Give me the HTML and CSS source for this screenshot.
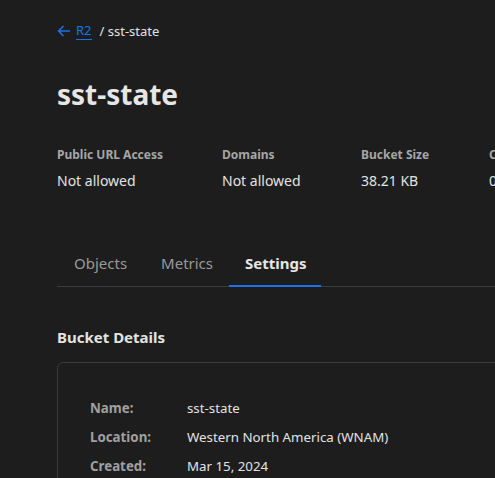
FILE: index.html
```html
<!DOCTYPE html>
<html>
<head>
<meta charset="utf-8">
<link rel="stylesheet" href="styles.css">
</head>
<body>
<div class="page">
  <nav class="crumbs">
    <a class="back" href="#"><svg width="14" height="12" viewBox="0 0 14 12"><path d="M13 6H1.5M6.5 1L1.5 6l5 5" fill="none" stroke="#1a73e8" stroke-width="1.5"/></svg><span class="r2">R2</span></a>
    <span class="sep">/ sst-state</span>
  </nav>
  <h1 class="title">sst-state</h1>
  <div class="stats">
    <div class="stat"><div class="stat-label">Public URL Access</div><div class="stat-value">Not allowed</div></div>
    <div class="stat"><div class="stat-label">Domains</div><div class="stat-value">Not allowed</div></div>
    <div class="stat"><div class="stat-label">Bucket Size</div><div class="stat-value">38.21 KB</div></div>
    <div class="stat"><div class="stat-label">Class A Operations</div><div class="stat-value">0</div></div>
  </div>
  <div class="tabs">
    <div class="tab">Objects</div>
    <div class="tab">Metrics</div>
    <div class="tab active">Settings</div>
  </div>
  <h2 class="section">Bucket Details</h2>
  <div class="card">
    <div class="row"><div class="k">Name:</div><div class="v">sst-state</div></div>
    <div class="row"><div class="k">Location:</div><div class="v">Western North America (WNAM)</div></div>
    <div class="row"><div class="k">Created:</div><div class="v">Mar 15, 2024</div></div>
  </div>
</div>
</body>
</html>
```
FILE: styles.css
```css
html, body {
  margin: 0;
  background: #1d1d1d;
  overflow: hidden;
}
body {
  font-family: "Noto Sans", "Open Sans", sans-serif;
  color: #e3e3e3;
  width: 495px;
  height: 478px;
}
.page {
  padding: 20px 0 0 57px;
  width: 800px;
}
.crumbs {
  display: flex;
  align-items: center;
  font-size: 13px;
  height: 22px;
}
.back {
  display: flex;
  align-items: center;
  gap: 5px;
  text-decoration: none;
  color: #1a73e8;
}
.r2 {
  border-bottom: 1px solid #1a73e8;
  line-height: 17px;
}
.sep {
  margin-left: 8px;
  color: #e3e3e3;
}
.title {
  margin: 30px 0 0;
  font-size: 28px;
  font-weight: 700;
  line-height: 44px;
  color: #e6e6e6;
}
.stats {
  display: grid;
  grid-template-columns: 165px 139px 128px auto;
  margin-top: 30px;
}
.stat {
  white-space: nowrap;
}
.stat-label {
  font-size: 12px;
  font-weight: 700;
  color: #a6a6a6;
  line-height: 18px;
}
.stat-value {
  font-size: 14px;
  margin-top: 7px;
  line-height: 20px;
}
.tabs {
  display: flex;
  margin-top: 51px;
  border-bottom: 1px solid #3c3c3c;
}
.tab {
  padding: 10px 16px 11px 17px;
  font-size: 15px;
  line-height: 22px;
  color: #999;
  margin-bottom: -1px;
  border-bottom: 2px solid transparent;
}
.tab:first-child {
  padding-right: 17px;
}
.tab.active {
  color: #e6e6e6;
  font-weight: 700;
  padding: 10px 14px 11px 16px;
  border-bottom-color: #1a73e8;
}
.section {
  margin: 39px 0 0;
  font-size: 15px;
  font-weight: 700;
  line-height: 22px;
  color: #e3e3e3;
}
.card {
  margin-top: 14px;
  border: 1px solid #3a3a3a;
  border-radius: 6px;
  padding: 35px 32px 20px;
  display: flex;
  flex-direction: column;
  gap: 9px;
}
.row {
  display: flex;
  font-size: 13.3px;
  line-height: 20px;
}
.k {
  width: 97px;
  font-weight: 700;
  color: #a0a0a0;
}
.v {
  color: #e3e3e3;
}
```
